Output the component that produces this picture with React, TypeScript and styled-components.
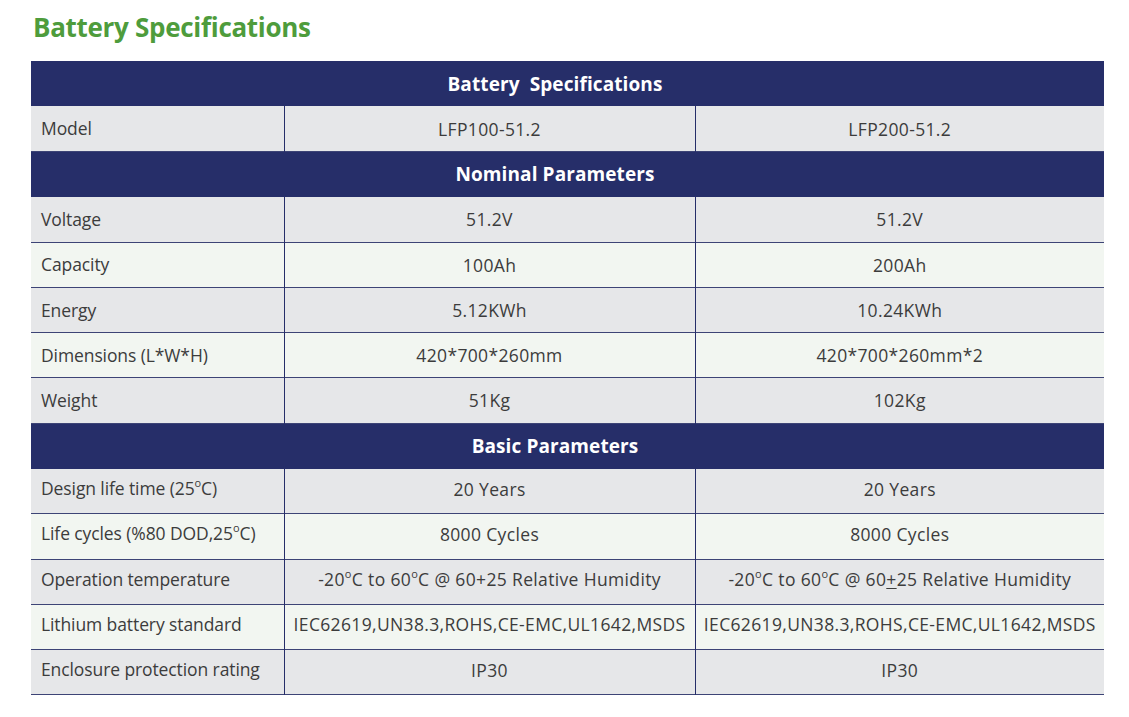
import React from "react";
import styled, { createGlobalStyle } from "styled-components";

const Global = createGlobalStyle`
  html, body { margin: 0; padding: 0; background: #ffffff; }
  body { font-family: "Open Sans", "Noto Sans", sans-serif; }
`;

const Page = styled.div`
  padding: 8px 25px 0 31px;
  width: 1073px;
`;

const Title = styled.h1`
  margin: 0 0 14px 2px;
  font-size: 26px;
  line-height: 39px;
  font-weight: 700;
  color: #4e9c3c;
  letter-spacing: -0.3px;
`;

const Table = styled.table`
  width: 1073px;
  border-collapse: collapse;
  table-layout: fixed;
`;

const HeadCell = styled.th`
  background: #262e69;
  color: #ffffff;
  height: 45.2px;
  padding: 0 25px 0 0;
  font-size: 19px;
  font-weight: 700;
  text-align: center;
  white-space: pre;
  letter-spacing: 0.1px;
`;

const Row = styled.tr<{ $alt?: boolean; $lift?: boolean }>`
  background: ${(p) => (p.$alt ? "#f2f6f1" : "#e6e7e9")};
  height: 45.2px;
  border-bottom: 1px solid #3d4476;
  & > td {
    padding-bottom: ${(p) => (p.$lift ? "6px" : "1px")};
  }
`;

const Label = styled.td`
  padding: 0 0 0 10px;
  font-size: 17.5px;
  color: #3c3c3c;
  border-right: 1px solid #262e69;
  white-space: nowrap;
  letter-spacing: -0.1px;
`;

const Value = styled.td`
  text-align: center;
  font-size: 17.5px;
  color: #3c3c3c;
  border-right: 1px solid #262e69;
  white-space: nowrap;
  letter-spacing: 0.35px;
  &:last-child { border-right: none; }
`;

const Deg = styled.sup`
  font-size: 11px;
  vertical-align: 8px;
  line-height: 0;
`;

const PlusMinus = styled.span`
  text-decoration: underline;
  text-underline-offset: 2px;
`;

const D = () => <Deg>o</Deg>;

const Section = ({ title }: { title: string }) => (
  <tr>
    <HeadCell colSpan={3}>{title}</HeadCell>
  </tr>
);

type R = { label: React.ReactNode; a: React.ReactNode; b: React.ReactNode; alt?: boolean };

const Rows = ({ rows, lift }: { rows: R[]; lift?: boolean }) => (
  <>
    {rows.map((r, i) => (
      <Row key={i} $alt={r.alt} $lift={lift}>
        <Label>{r.label}</Label>
        <Value>{r.a}</Value>
        <Value>{r.b}</Value>
      </Row>
    ))}
  </>
);

const std = "IEC62619,UN38.3,ROHS,CE-EMC,UL1642,MSDS";

export default function App() {
  return (
    <Page>
      <Global />
      <Title>Battery Specifications</Title>
      <Table>
        <colgroup>
          <col style={{ width: 253 }} />
          <col style={{ width: 411 }} />
          <col style={{ width: 409 }} />
        </colgroup>
        <tbody>
          <Section title={"Battery  Specifications"} />
          <Rows rows={[{ label: "Model", a: "LFP100-51.2", b: "LFP200-51.2" }]} />
          <Section title="Nominal Parameters" />
          <Rows
            rows={[
              { label: "Voltage", a: "51.2V", b: "51.2V" },
              { label: "Capacity", a: "100Ah", b: "200Ah", alt: true },
              { label: "Energy", a: "5.12KWh", b: "10.24KWh" },
              { label: "Dimensions (L*W*H)", a: "420*700*260mm", b: "420*700*260mm*2", alt: true },
              { label: "Weight", a: "51Kg", b: "102Kg" },
            ]}
          />
          <Section title="Basic Parameters" />
          <Rows
            lift
            rows={[
              { label: <>Design life time (25<D />C)</>, a: "20 Years", b: "20 Years" },
              { label: <>Life cycles (%80 DOD,25<D />C)</>, a: "8000 Cycles", b: "8000 Cycles", alt: true },
              {
                label: "Operation temperature",
                a: <>-20<D />C to 60<D />C @ 60+25 Relative Humidity</>,
                b: <>-20<D />C to 60<D />C @ 60<PlusMinus>+</PlusMinus>25 Relative Humidity</>,
              },
              { label: "Lithium battery standard", a: std, b: std, alt: true },
              { label: "Enclosure protection rating", a: "IP30", b: "IP30" },
            ]}
          />
        </tbody>
      </Table>
    </Page>
  );
}
